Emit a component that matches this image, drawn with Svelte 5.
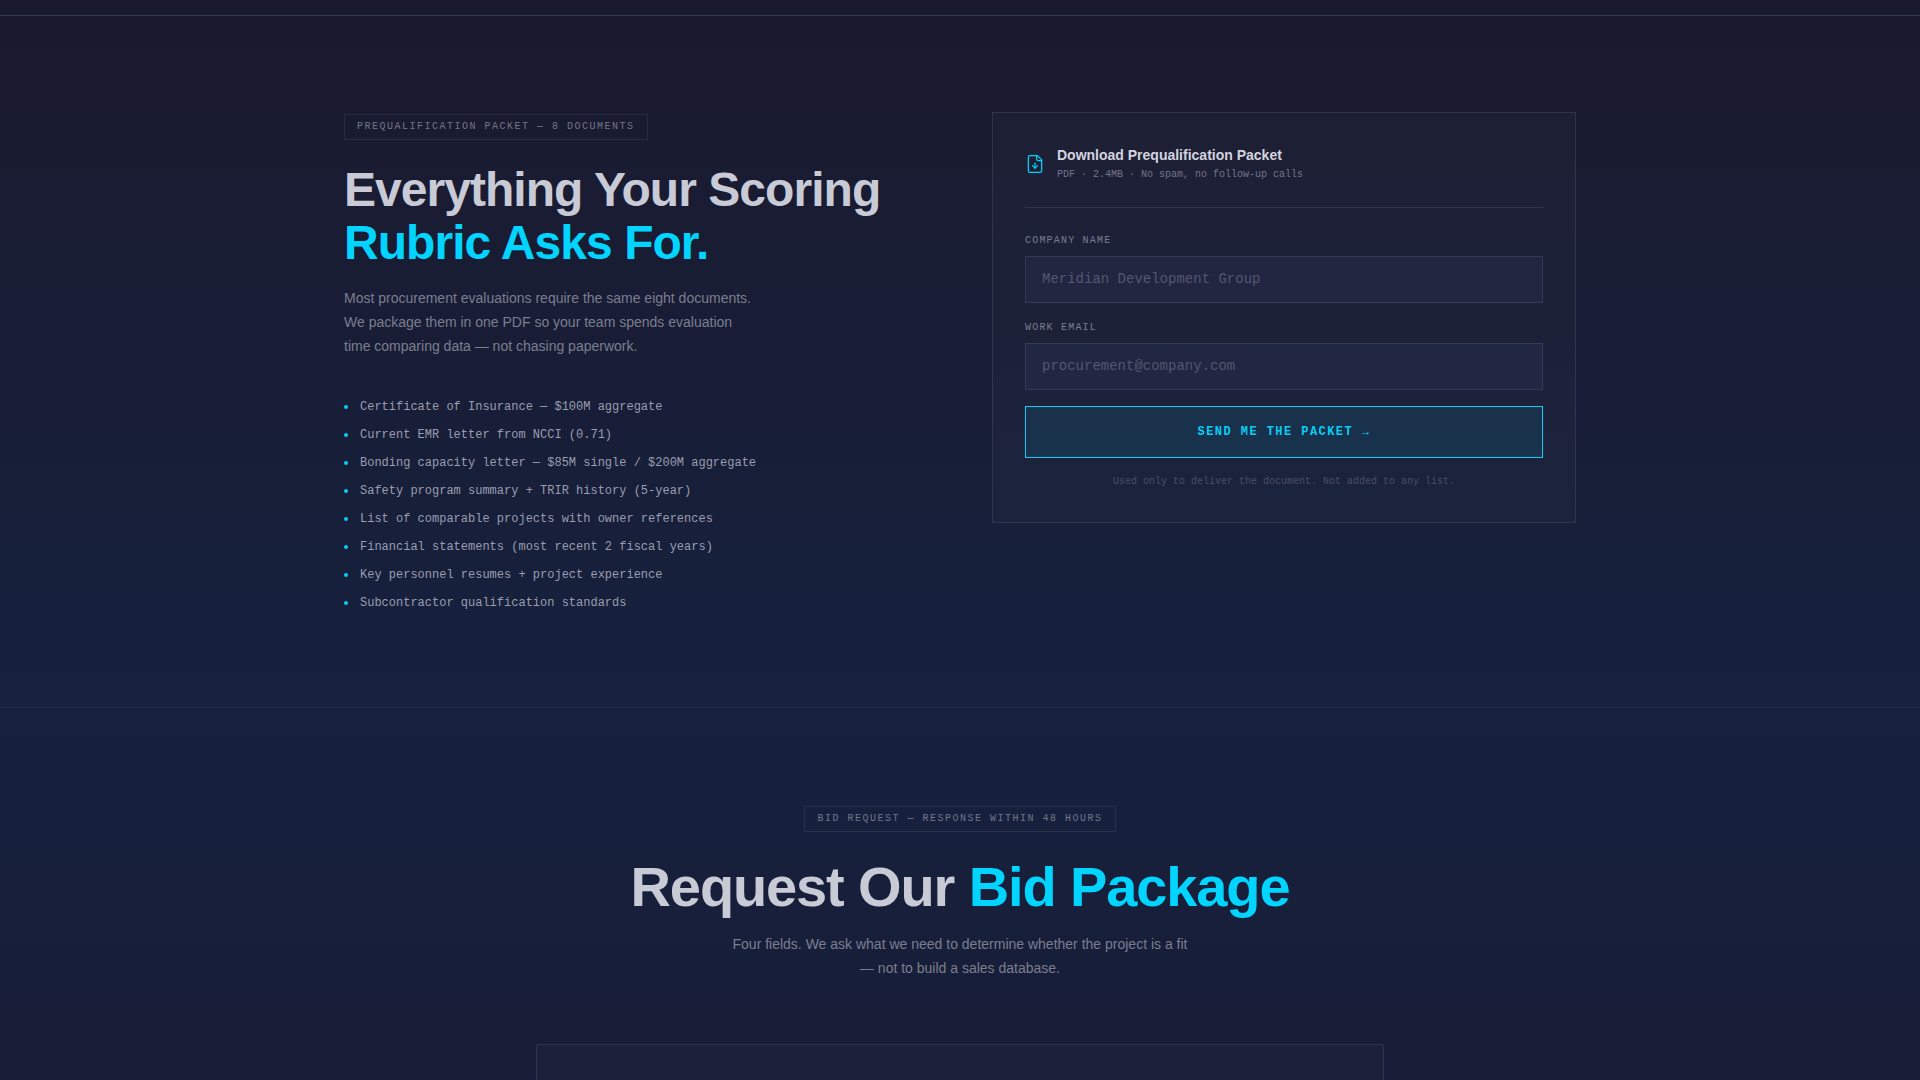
<script>
  const documents = [
    'Certificate of Insurance — $100M aggregate',
    'Current EMR letter from NCCI (0.71)',
    'Bonding capacity letter — $85M single / $200M aggregate',
    'Safety program summary + TRIR history (5-year)',
    'List of comparable projects with owner references',
    'Financial statements (most recent 2 fiscal years)',
    'Key personnel resumes + project experience',
    'Subcontractor qualification standards'
  ];

  let company = $state('');
  let email = $state('');
</script>

<div class="page">
  <main>
    <section class="packet">
      <div class="container columns">
        <div>
          <div class="eyebrow"><span class="badge">Prequalification Packet — 8 Documents</span></div>
          <h1>Everything Your Scoring <span class="accent">Rubric Asks For.</span></h1>
          <p class="lead">
            Most procurement evaluations require the same eight documents. We package them in one PDF so your
            team spends evaluation time comparing data — not chasing paperwork.
          </p>
          <ul class="documents">
            {#each documents as name}
              <li>{name}</li>
            {/each}
          </ul>
        </div>

        <form class="card" onsubmit={(event) => event.preventDefault()}>
          <div class="card-head">
            <svg class="icon" viewBox="0 0 24 24" aria-hidden="true">
              <path d="M15 2H6a2 2 0 0 0-2 2v16a2 2 0 0 0 2 2h12a2 2 0 0 0 2-2V7Z" />
              <path d="M14 2v4a2 2 0 0 0 2 2h4" />
              <path d="M12 11v6" />
              <path d="m9 14 3 3 3-3" />
            </svg>
            <div>
              <h2 class="card-title">Download Prequalification Packet</h2>
              <p class="card-meta">PDF · 2.4MB · No spam, no follow-up calls</p>
            </div>
          </div>
          <div class="field">
            <label for="company">Company Name</label>
            <input id="company" type="text" placeholder="Meridian Development Group" bind:value={company} />
          </div>
          <div class="field">
            <label for="email">Work Email</label>
            <input id="email" type="email" placeholder="procurement@company.com" bind:value={email} />
          </div>
          <button type="submit">Send me the packet →</button>
          <p class="note">Used only to deliver the document. Not added to any list.</p>
        </form>
      </div>
    </section>

    <section class="bid">
      <div class="container narrow">
        <div class="eyebrow"><span class="badge">Bid Request — Response Within 48 Hours</span></div>
        <h2 class="bid-title">Request Our <span class="accent">Bid Package</span></h2>
        <p class="bid-lead">
          Four fields. We ask what we need to determine whether the project is a fit — not to build a sales
          database.
        </p>
        <div class="bid-card"></div>
      </div>
    </section>
  </main>
</div>

<style>
  :global(body) {
    background: #1a1a2e;
  }

  .page,
  .page * {
    box-sizing: border-box;
  }

  .page {
    --sans: 'Liberation Sans', Arial, sans-serif;
    --mono: 'Liberation Mono', 'Courier New', monospace;
    --line: rgba(255, 255, 255, 0.09);
    --cyan: #00d4ff;
    min-height: 100vh;
    display: flex;
    flex-direction: column;
    padding-top: 15px;
    background: #1a1a2e;
    color: #c8cad6;
    font-family: var(--sans);
  }

  main {
    flex: 1;
    display: flex;
    flex-direction: column;
  }

  h1,
  h2,
  p,
  ul {
    margin: 0;
    padding: 0;
  }

  .container {
    width: 100%;
    max-width: 1280px;
    margin: 0 auto;
    padding: 0 24px;
  }

  .packet {
    padding: 96px 0;
    border-top: 1px solid rgba(255, 255, 255, 0.12);
    background: linear-gradient(180deg, #1a1a2e, #16213e);
  }

  .columns {
    display: grid;
    grid-template-columns: 1fr 1fr;
    gap: 64px;
    align-items: start;
  }

  .eyebrow {
    display: flex;
    padding-top: 2px;
    margin-bottom: 23px;
  }

  .badge {
    padding: 5px 12px;
    border: 1px solid rgba(255, 255, 255, 0.08);
    color: #737689;
    font: 10px/14px var(--mono);
    letter-spacing: 0.15em;
    text-transform: uppercase;
  }

  h1 {
    font-size: 48px;
    line-height: 53px;
    letter-spacing: -0.02em;
  }

  h1 .accent {
    display: block;
  }

  .accent {
    color: var(--cyan);
  }

  .lead {
    max-width: 412px;
    margin: 17px 0 41px;
    color: #7b7e90;
    font-size: 14px;
    line-height: 24px;
  }

  .documents {
    display: grid;
    gap: 12px;
    list-style: none;
  }

  .documents li {
    display: flex;
    align-items: center;
    gap: 12px;
    color: #9a9db0;
    font: 12px/16px var(--mono);
  }

  .documents li::before {
    content: '';
    flex: none;
    width: 4px;
    height: 4px;
    border-radius: 50%;
    background: #08cdf5;
  }

  .card {
    padding: 32px;
    border: 1px solid var(--line);
    background: rgba(255, 255, 255, 0.02);
  }

  .card-head {
    display: flex;
    align-items: center;
    gap: 12px;
    padding-bottom: 24px;
    margin-bottom: 24px;
    border-bottom: 1px solid var(--line);
  }

  .icon {
    flex: none;
    width: 20px;
    height: 20px;
    fill: none;
    stroke: var(--cyan);
    stroke-width: 1.5;
    stroke-linecap: round;
    stroke-linejoin: round;
  }

  .card-title {
    margin-bottom: 2px;
    color: #d2d4df;
    font-size: 14px;
    line-height: 20px;
  }

  .card-meta {
    color: #737689;
    font: 10px/16px var(--mono);
  }

  .field {
    display: grid;
    gap: 6px;
    margin-bottom: 16px;
  }

  label {
    color: #7b7e90;
    font: 10px/18px var(--mono);
    letter-spacing: 0.12em;
    text-transform: uppercase;
  }

  input {
    width: 100%;
    padding: 14px 16px;
    border: 1px solid var(--line);
    border-radius: 0;
    background: rgba(48, 50, 88, 0.3);
    color: #c8cad6;
    font: 14px/17px var(--mono);
    outline: none;
  }

  input::placeholder {
    color: #54576f;
    opacity: 1;
  }

  input:focus {
    border-color: var(--cyan);
  }

  button {
    display: block;
    width: 100%;
    padding: 15px 16px;
    border: 1px solid #08cdf5;
    background: rgba(0, 212, 255, 0.09);
    color: #08cdf5;
    font: bold 12px/20px var(--mono);
    letter-spacing: 0.12em;
    text-transform: uppercase;
    cursor: pointer;
  }

  .note {
    margin-top: 16px;
    color: #4b4e64;
    font: 10px/16px var(--mono);
    text-align: center;
  }

  .bid {
    flex: 1;
    display: flex;
    padding-top: 96px;
    border-top: 1px solid rgba(255, 255, 255, 0.07);
    background: linear-gradient(180deg, #16213e, #181d37);
  }

  .narrow {
    max-width: 896px;
    display: flex;
    flex-direction: column;
    align-items: center;
    text-align: center;
  }

  .bid-title {
    font-size: 56px;
    line-height: 64px;
    letter-spacing: -0.02em;
  }

  .bid-lead {
    max-width: 464px;
    margin: 13px 0 64px;
    color: #7b7e90;
    font-size: 14px;
    line-height: 24px;
  }

  .bid-card {
    flex: 1;
    width: 100%;
    border: 1px solid var(--line);
    border-bottom: 0;
    border-radius: 2px 2px 0 0;
    background: rgba(255, 255, 255, 0.02);
  }
</style>
